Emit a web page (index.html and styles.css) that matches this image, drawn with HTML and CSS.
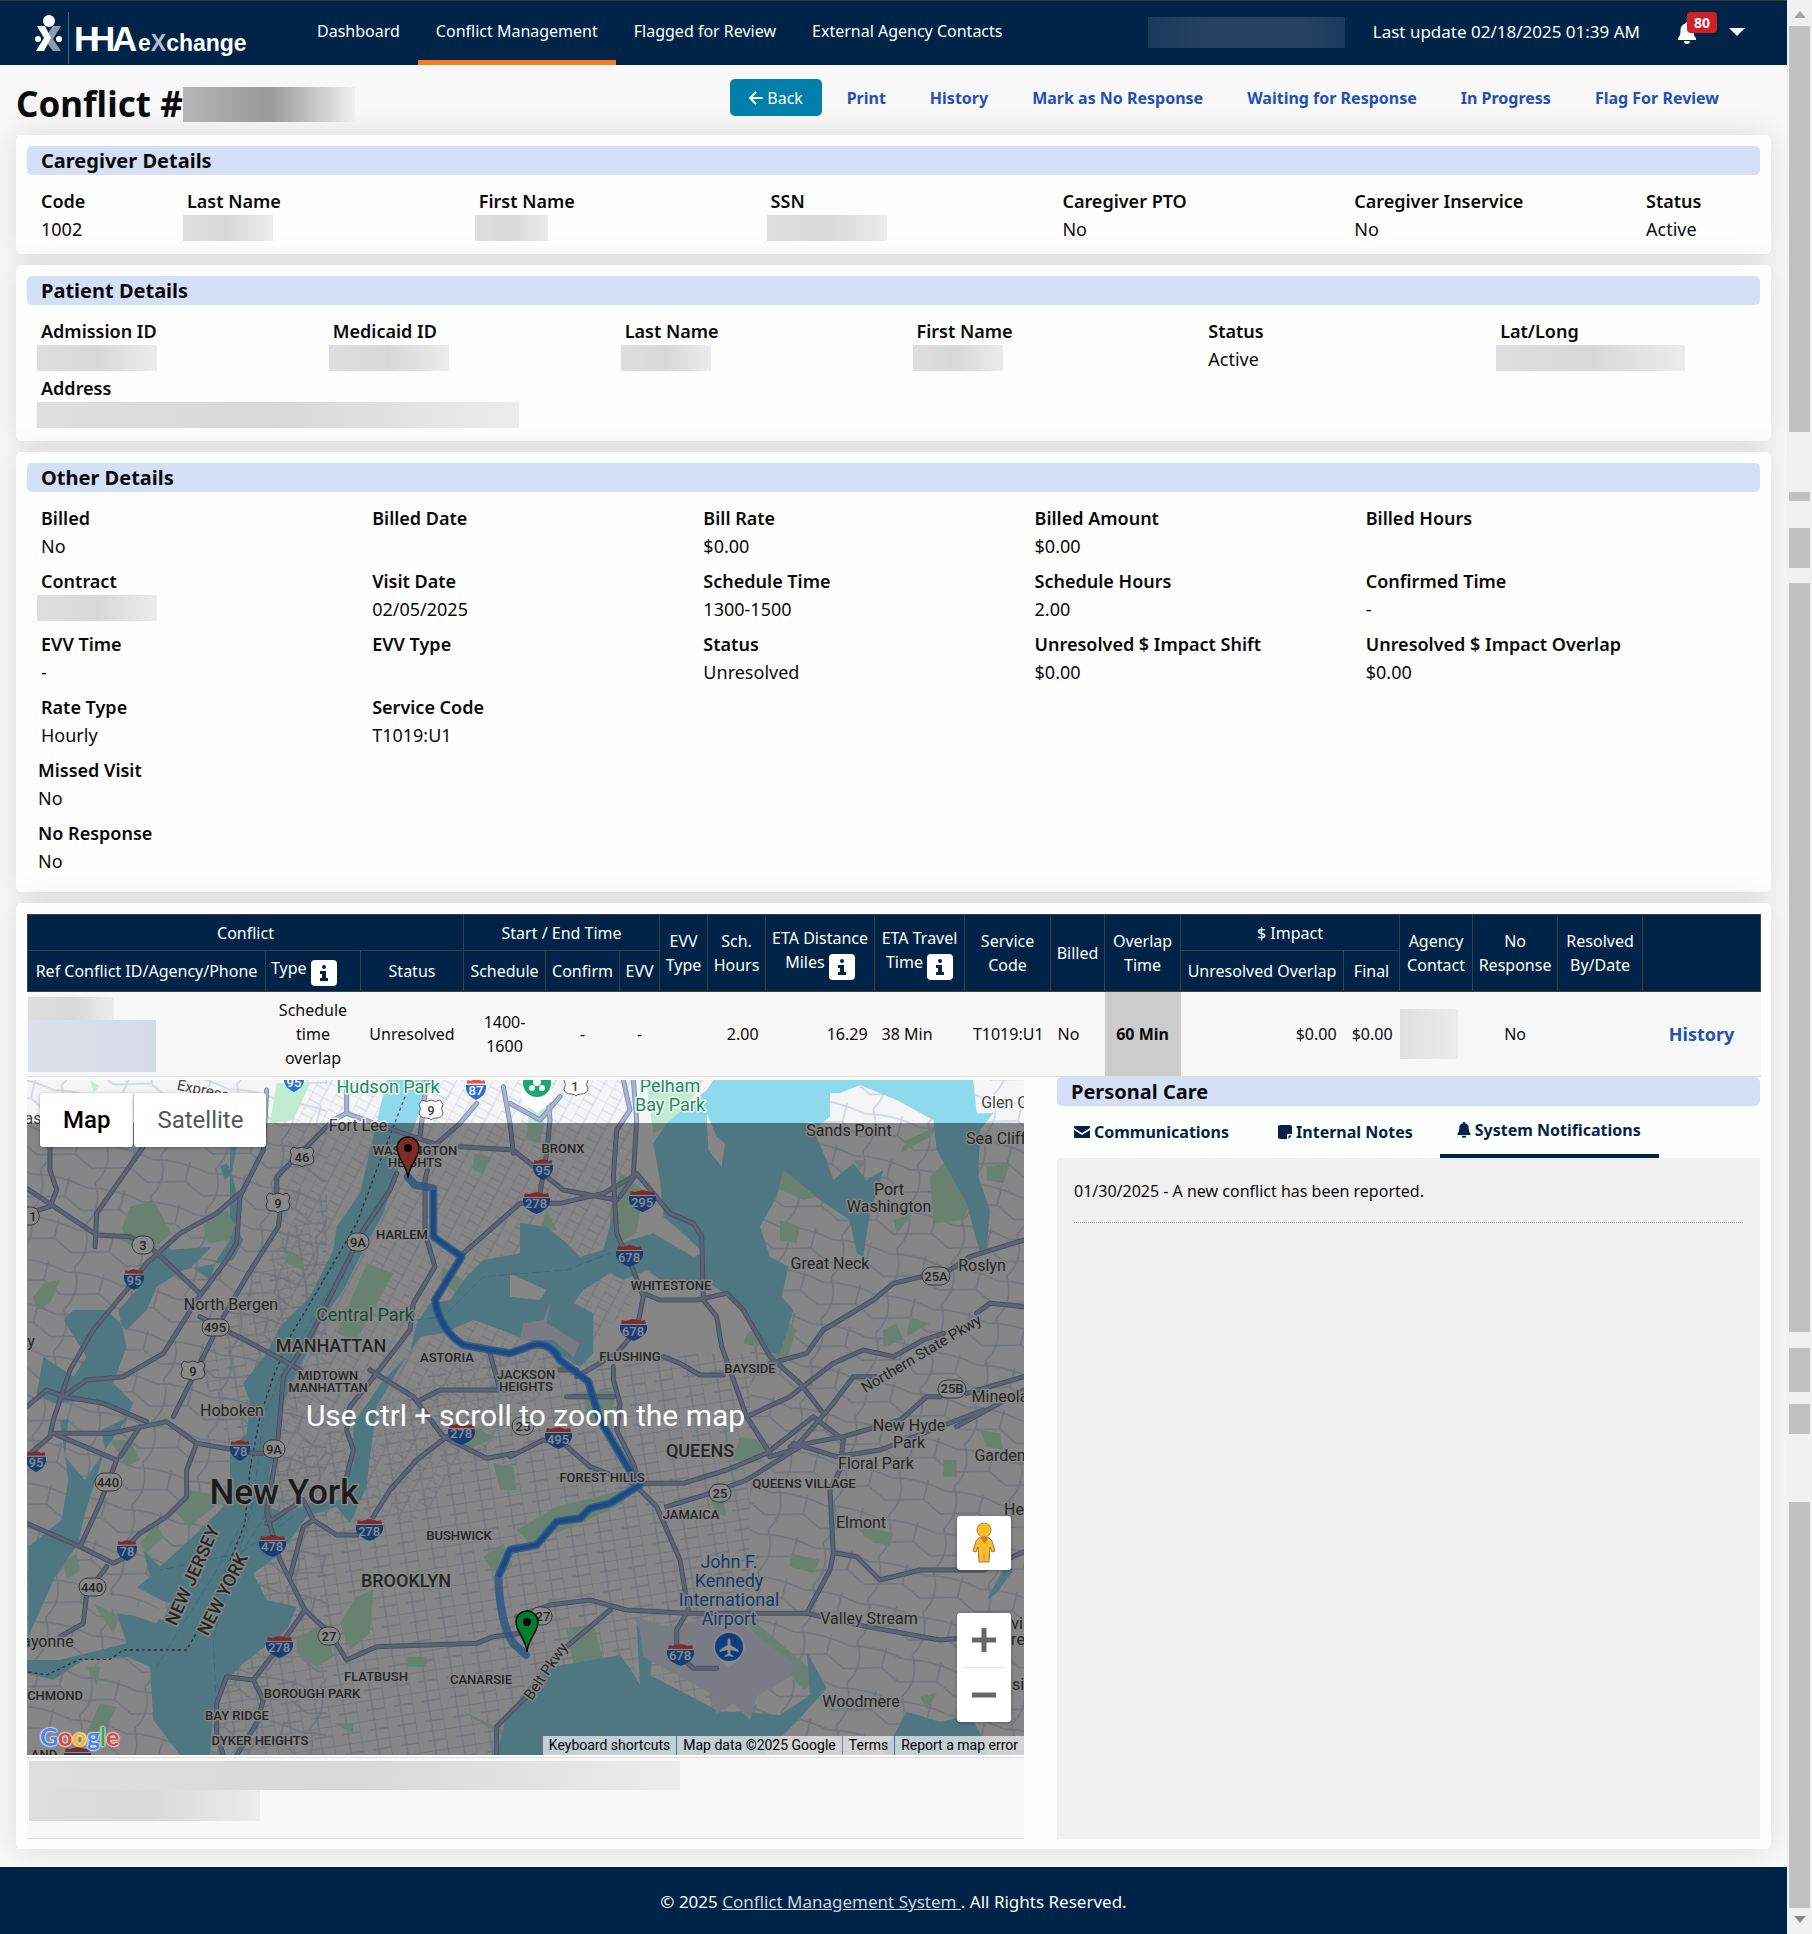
FILE: index.html
```html
<!DOCTYPE html>
<html lang="en">
<head>
    <meta charset="UTF-8">
    <meta name="viewport" content="width=device-width, initial-scale=1.0">
    <title>Conflict Management</title>
    <link rel="stylesheet" href="styles.css">
</head>
<body>
    <div class="page">
        <header class="topbar">
            <a class="brand" href="#" aria-label="HHAeXchange">
                <svg width="216" height="64" viewBox="0 0 216 64">
                    <circle cx="14" cy="20" r="6" fill="#fff"/>
                    <path d="M18 25h8l-8 13 8 12h-8L9 38z" fill="#8d9bad"/>
                    <path d="M2 25h8l6 12-7 13H1l8-13z" fill="#fff"/>
                    <circle cx="3" cy="38" r="3" fill="#fff"/>
                    <circle cx="24" cy="38" r="3" fill="#fff"/>
                    <path d="M33.500 11v52" stroke="#4d6680"/>
                    <text class="logo-big" y="50"><tspan x="39">H</tspan><tspan x="55">H</tspan><tspan x="77">A</tspan></text>
                    <text class="logo-small" x="103" y="50">e<tspan fill="#b4becb">X</tspan>change</text>
                </svg>
            </a>
            <nav class="main-nav">
                <a href="#">Dashboard</a>
                <a href="#" class="active">Conflict Management</a>
                <a href="#">Flagged for Review</a>
                <a href="#">External Agency Contacts</a>
            </nav>
            <div class="user-area">
                <span class="user-name"></span>
                <span>Last update 02/18/2025 01:39 AM</span>
                <button type="button" class="bell" aria-label="Notifications">
                    <svg width="18" height="22" viewBox="0 0 18 22" fill="#fff"><path d="M9 0c1 0 1.500.7 1.500 1.600C14 2.400 15.500 5 15.500 8c0 5 1 6.500 2.500 8v2H0v-2c1.500-1.500 2.500-3 2.500-8 0-3 1.500-5.600 5-6.400C7.500.7 8 0 9 0zM6 19h6a3 3 0 0 1-6 0z"/></svg>
                    <span class="badge">80</span>
                </button>
                <button type="button" class="caret" aria-label="Account menu"></button>
            </div>
        </header>

        <main>
            <div class="title-row">
                <h1>Conflict #<span class="mask mask-title"></span></h1>
                <div class="actions">
                    <button type="button" class="btn-back">
                        <svg width="15" height="14" viewBox="0 0 15 14" fill="none" stroke="#fff" stroke-width="2"><path d="M15 7H2M8 1L2 7l6 6"/></svg>
                        Back
                    </button>
                    <a href="#">Print</a>
                    <a href="#">History</a>
                    <a href="#">Mark as No Response</a>
                    <a href="#">Waiting for Response</a>
                    <a href="#">In Progress</a>
                    <a href="#">Flag For Review</a>
                </div>
            </div>

            <section class="card">
                <h2>Caregiver Details</h2>
                <dl class="fields twelve">
                    <div class="narrow"><dt>Code</dt><dd>1002</dd></div>
                    <div><dt>Last Name</dt><dd><span class="mask mask-sm"></span></dd></div>
                    <div><dt>First Name</dt><dd><span class="mask mask-xs"></span></dd></div>
                    <div><dt>SSN</dt><dd><span class="mask mask-md"></span></dd></div>
                    <div><dt>Caregiver PTO</dt><dd>No</dd></div>
                    <div><dt>Caregiver Inservice</dt><dd>No</dd></div>
                    <div class="narrow"><dt>Status</dt><dd>Active</dd></div>
                </dl>
            </section>

            <section class="card">
                <h2>Patient Details</h2>
                <dl class="fields twelve">
                    <div><dt>Admission ID</dt><dd><span class="mask mask-md"></span></dd></div>
                    <div><dt>Medicaid ID</dt><dd><span class="mask mask-md"></span></dd></div>
                    <div><dt>Last Name</dt><dd><span class="mask mask-sm"></span></dd></div>
                    <div><dt>First Name</dt><dd><span class="mask mask-sm"></span></dd></div>
                    <div><dt>Status</dt><dd>Active</dd></div>
                    <div><dt>Lat/Long</dt><dd><span class="mask mask-lg"></span></dd></div>
                    <div class="full"><dt>Address</dt><dd><span class="mask mask-xl"></span></dd></div>
                </dl>
            </section>

            <section class="card">
                <h2>Other Details</h2>
                <dl class="fields five">
                    <div><dt>Billed</dt><dd>No</dd></div>
                    <div><dt>Billed Date</dt><dd></dd></div>
                    <div><dt>Bill Rate</dt><dd>$0.00</dd></div>
                    <div><dt>Billed Amount</dt><dd>$0.00</dd></div>
                    <div><dt>Billed Hours</dt><dd></dd></div>
                    <div class="first"><dt>Contract</dt><dd><span class="mask mask-md"></span></dd></div>
                    <div><dt>Visit Date</dt><dd>02/05/2025</dd></div>
                    <div><dt>Schedule Time</dt><dd>1300-1500</dd></div>
                    <div><dt>Schedule Hours</dt><dd>2.00</dd></div>
                    <div><dt>Confirmed Time</dt><dd>-</dd></div>
                    <div class="first"><dt>EVV Time</dt><dd>-</dd></div>
                    <div><dt>EVV Type</dt><dd></dd></div>
                    <div><dt>Status</dt><dd>Unresolved</dd></div>
                    <div><dt>Unresolved $ Impact Shift</dt><dd>$0.00</dd></div>
                    <div><dt>Unresolved $ Impact Overlap</dt><dd>$0.00</dd></div>
                    <div class="first"><dt>Rate Type</dt><dd>Hourly</dd></div>
                    <div><dt>Service Code</dt><dd>T1019:U1</dd></div>
                </dl>
                <dl class="fields stacked">
                    <div><dt>Missed Visit</dt><dd>No</dd></div>
                    <div><dt>No Response</dt><dd>No</dd></div>
                </dl>
            </section>

            <section class="card">
                <table class="conflicts">
                    <colgroup>
                        <col class="c-ref"><col class="c-type"><col class="c-status"><col class="c-sched"><col class="c-confirm"><col class="c-evv"><col class="c-evvtype"><col class="c-hours"><col class="c-dist"><col class="c-travel"><col class="c-service"><col class="c-billed"><col class="c-overlap"><col class="c-unres"><col class="c-final"><col class="c-agency"><col class="c-resp"><col class="c-resp"><col class="c-history">
                    </colgroup>
                    <thead>
                        <tr>
                            <th colspan="3">Conflict</th>
                            <th colspan="3">Start / End Time</th>
                            <th rowspan="2">EVV Type</th>
                            <th rowspan="2">Sch. Hours</th>
                            <th rowspan="2">ETA Distance Miles <button type="button" class="info" aria-label="About distance"><svg width="10" height="16" viewBox="0 0 10 16" fill="#002447"><circle cx="5" cy="2" r="2"/><path d="M1 6h6v7h2v3H1v-3h2V9H1z"/></svg></button></th>
                            <th rowspan="2">ETA Travel Time <button type="button" class="info" aria-label="About travel time"><svg width="10" height="16" viewBox="0 0 10 16" fill="#002447"><circle cx="5" cy="2" r="2"/><path d="M1 6h6v7h2v3H1v-3h2V9H1z"/></svg></button></th>
                            <th rowspan="2">Service Code</th>
                            <th rowspan="2">Billed</th>
                            <th rowspan="2">Overlap Time</th>
                            <th colspan="2">$ Impact</th>
                            <th rowspan="2">Agency Contact</th>
                            <th rowspan="2">No Response</th>
                            <th rowspan="2">Resolved By/Date</th>
                            <th rowspan="2"></th>
                        </tr>
                        <tr>
                            <th>Ref Conflict ID/Agency/Phone</th>
                            <th class="left">Type <button type="button" class="info" aria-label="About type"><svg width="10" height="16" viewBox="0 0 10 16" fill="#002447"><circle cx="5" cy="2" r="2"/><path d="M1 6h6v7h2v3H1v-3h2V9H1z"/></svg></button></th>
                            <th>Status</th>
                            <th>Schedule</th>
                            <th>Confirm</th>
                            <th>EVV</th>
                            <th>Unresolved Overlap</th>
                            <th>Final</th>
                        </tr>
                    </thead>
                    <tbody>
                        <tr>
                            <td class="bare"><span class="mask mask-ref"></span><span class="mask mask-agency"></span></td>
                            <td>Schedule time overlap</td>
                            <td>Unresolved</td>
                            <td>1400-1600</td>
                            <td>-</td>
                            <td>-</td>
                            <td></td>
                            <td class="right">2.00</td>
                            <td class="right">16.29</td>
                            <td class="left">38 Min</td>
                            <td class="right">T1019:U1</td>
                            <td class="left">No</td>
                            <td class="overlap">60 Min</td>
                            <td class="right">$0.00</td>
                            <td class="right">$0.00</td>
                            <td class="bare"><span class="mask mask-contact"></span></td>
                            <td>No</td>
                            <td></td>
                            <td><a href="#">History</a></td>
                        </tr>
                    </tbody>
                </table>

                <div class="split">
                    <div class="left-pane">
                        <div class="map">
                            <svg class="map-canvas" viewBox="27 10 997 675" preserveAspectRatio="xMidYMid slice">
                                <defs>
                                    <pattern id="streets" width="66" height="48" patternUnits="userSpaceOnUse" patternTransform="rotate(28)"><path d="M0 0H66M0 25H40M0 0V48M36 0V48" stroke="#ccd5e3" stroke-width="3" fill="none"/></pattern>
                                    <pattern id="streets2" width="84" height="60" patternUnits="userSpaceOnUse" patternTransform="rotate(-9)"><path d="M0 0H84M30 30H84M0 0V60M48 0V60" stroke="#ccd5e3" stroke-width="4" fill="none"/></pattern>
                                    <pattern id="streets3" width="170" height="130" patternUnits="userSpaceOnUse" patternTransform="rotate(14)"><path d="M0 20Q80 0 170 20M20 0Q60 70 20 130M110 0V60L170 90M0 90L110 60" stroke="#ccd5e3" stroke-width="5" fill="none"/></pattern>
                                    <symbol id="interstate" viewBox="0 0 27 22" preserveAspectRatio="none"><path d="M0 6H27Q28 13 23 17 19 20 13.500 22 8 20 4 17-1 13 0 6z" fill="#2a6fd6"/><path d="M1 5L2 1l4 1 3-1 4.500-1L18 1l3 1 4-1 1 4z" fill="#e35149"/><path d="M0 5.500H27" stroke="#fff"/></symbol>
                                    <symbol id="us" viewBox="0 0 26 22"><path d="M4 1q4 3 9 0 5 3 9 0l3 4q-3 4 0 9-1 5-7 5-4 0-5 2-1-2-5-2-6 0-7-5 3-5 0-9z" fill="#fafafa" stroke="#666"/></symbol>
                                    <symbol id="pin" viewBox="0 0 24 43"><path d="M12 42C11 29 1 22 1 12a11 11 0 0 1 22 0C23 22 13 29 12 42z" stroke="#111" stroke-width="1.500"/><circle cx="12" cy="12" r="4" fill="#000"/></symbol>
                                    <g id="roads">
                                        <path d="M80 355L290 495 390 500 450 530 600 670M600 740L830 860 900 900M80 1010L140 960 190 980 310 1000 440 1055"/>
                                        <path d="M430 230L290 430 285 530M150 170L150 300 170 360 150 410 80 430M800 60L790 240 720 380 710 520 680 570 590 690 560 740 490 850 370 920 260 930 190 980"/>
                                        <path d="M1000 150L830 320V370M840 430L835 470 740 620 670 740M640 800L580 920 520 1040"/>
                                        <path d="M730 360L650 430 540 490 440 580 380 660 280 780 210 900 160 1050 150 1100 80 1160"/>
                                        <path d="M1040 30V130L1000 150M1040 130L1180 180 1300 220M1190 310L1170 360 1090 480 990 680 930 800 850 920 840 1040 830 1150 800 1320 810 1350"/>
                                        <path d="M1280 30L1260 200M1430 100L1380 160 1300 230 1275 330V490L1305 590 1240 700 1230 780 1130 910 1050 1010"/>
                                        <path d="M1380 230L1540 240 1690 360 1850 390M1390 550L1560 400 1680 400 1810 370 1900 320 1910 150 1900 30M1640 30L1650 150 1640 250 1620 370M1870 30L1890 120 1850 180 1840 320 1850 490 1900 600 1930 680 1910 780 1850 850 1730 920"/>
                                        <path d="M1530 100L1620 150 1680 80M1860 380L1910 310 2010 430 2080 460 2105 500 2110 680M1930 670L1980 690 2090 690 2180 670 2230 720 2310 860 2400 940 2470 1030"/>
                                        <path d="M2110 690L2150 740 2165 830 2240 1040 2310 1150M2310 880L2420 850 2470 780 2620 690 2680 640 2850 600 2910 560 3072 510"/>
                                        <path d="M1730 900H1680M1990 860L2040 880 2100 915H2170M2240 1040L2370 980 2500 880 2590 840 2680 860 2770 810 2830 790M2930 730L2970 700 3072 710M2630 920H2560L2500 1000 2380 1140 2310 1160M2680 1070L2780 980H2820M2900 970L3072 920M2870 1070L3072 960"/>
                                        <path d="M1840 890V930L1860 1000 1850 1080 1900 1180 1920 1240M1930 1240H2050L2180 1200 2300 1150 2440 1040 2530 1110 2520 1200 2490 1260 2500 1450 2490 1500 2420 1630M2380 1120L2510 1160 2640 1140 2950 1020M2370 1130L2530 1100 2700 1050"/>
                                        <path d="M1110 900L1240 980 1330 1100 1460 1165 1540 1150M1260 990L1320 960 1520 960M1470 850L1500 960M1340 1100L1250 1170 1170 1260 1120 1340M1530 1160L1630 1110 1690 1120 1770 1190 1900 1240 1970 1310 2040 1470 2065 1620 2030 1680V1750L2080 1795H2150"/>
                                        <path d="M2000 1310L2130 1270 2240 1230 2400 1130M2510 1450L2570 1460 2640 1530 2760 1500 2950 1500 3072 1445M1550 1640L1650 1605 1770 1590 1880 1620 2060 1630 2420 1630 2600 1670 2820 1710 2880 1705"/>
                                        <path d="M160 1090L330 1090 500 1055 590 1120 760 1150 820 1150M590 1120L560 1200V1280L500 1340 420 1390 390 1420M160 1090L350 1170 300 1300 240 1430M420 1070L360 1160M80 1360L240 1430 340 1480 380 1460M320 1490L260 1570 250 1660 180 1700"/>
                                        <path d="M800 1360L910 1290 940 1350 1010 1395H1070M940 1350L910 1370 870 1520M800 1330L840 1470 915 1620 830 1740 760 1830 680 1820 650 1900V1990L670 2055M915 1620L990 1690 1040 1770 1130 1730 1430 1720 1480 1700 1560 1690 1620 1640M760 1830L790 1890 770 1960 710 2055M1700 1730L1830 1620M1580 1880L1490 1970V2055"/>
                                        <path d="M1050 1010L1040 1080 1060 1140 1040 1220M1510 50L1530 160 1540 250M1840 980L1700 980"/>
                                    </g>
                                </defs>
                                <g transform="scale(.33333)">
                                    <rect x="81" y="30" width="2991" height="2025" fill="#f5f5f5"/>
                                    <rect x="81" y="30" width="900" height="2025" fill="url(#streets3)"/>
                                    <path d="M850 30H1900V700L1250 1350H800z" fill="url(#streets)"/>
                                    <path d="M700 1250L1400 850H2250V2055H600z" fill="url(#streets2)"/>
                                    <path d="M2250 30H3072V2055H2250z" fill="url(#streets3)"/>
                                    <path d="M600 900L850 500 980 360V900L740 1250z" fill="url(#streets2)"/>

                                    <g fill="#c0ecd2">
                                        <path d="M830 40H930L880 150 810 160zM270 30l30 20-20 15zM390 410l70-20 55 100-60 50-70-15-20-50zM610 470l60-50 45 10-30 80-60 10zM130 640l50-10-30 70-40 20-10-40zM860 540l50 20 0 40-50-20zM1100 580l80 30-110 200-60-20zM1330 590l60 40-20 40-50-40zM1420 250l50 10-20 50-30-10z"/>
                                        <path d="M1590 60l60 20-30 140-40-10zM1940 40l170-10-80 130-70 30zM2050 130l50 0-30 70zM2240 120l40 30-40 70zM1860 310l70 50-20 130-80 40 0-110zM1640 420l30 60-50 10zM2350 290l100 90-40 10-110-50zM2340 450l60 20-10 50-50-10zM2720 210l90-40-20 30-90 50zM2840 270l80 110-30 70-90 10-10-140zM2960 290l70-10-20 60-50-10zM2560 270l40 0-20 30zM2680 450l60-20-50 60zM2120 1260l40-20 20 100-30-10zM2240 790l40-20-10 60-40-10zM2330 720l60 60-30 90-60-30zM2730 740l60 20-70 40zM2650 780l40-20 20 50-60 20zM1750 970l100-10-20 90-70 0z"/>
                                        <path d="M330 1110l60 0 30 60-40 20zM520 1320l50-60 110 20-110 90zM420 1420l50-60 20 40-50 50zM190 1480l40-30 10 50-40 30zM280 1600l80 40-20 50zM730 1470l60-60 20 20-60 60zM1020 1660l50-80 50-20-10 130-60 50zM890 1700l90-40 20 100-50 30-60-40zM1220 1760l60 0 0 30-60 0zM1450 1460l60-40 30 70-50 30zM1340 1100l100-20 50 20-90 40zM1480 1180l60 10 10 70-50 0zM260 1790l40 0-10 60zM300 1900l50 10-40 90-60 10zM1380 1920l130 60 0 20zM1000 1960l60 0 0 30z"/>
                                        <path d="M1550 1380l120-70 200-50 0 40-130 60-150 60zM1700 1680l80-20 30 110-80 60zM1850 1800l60 80 20 160-40-10zM2220 1100l80 20-20 60-80-10zM2370 1450l90 20-20 40-70-20zM2590 1370l90 20-10 40-80-30zM2830 1170l40 0 0 50-40 0zM2940 1080l60 10 10 50-50-10zM2220 1640l50 20 200 170-60 30zM2760 1880l50-10-30 50z"/>
                                    </g>
                                    <g fill="#8fd9ed">
                                        <path d="M1160 30H1300L1250 150 1190 310 1150 430 1090 540 1030 660 960 760 920 850 880 930 850 1000 840 1100 810 1200 800 1310 860 1330 930 1300 1020 1290 1060 1180 1060 1060 1150 930 1230 850 1250 760 1290 700 1350 690 1400 620 1450 570 1560 550 1560 460 1640 470 1700 520 1740 560 1810 540 1840 430 1860 520 1960 490 2080 560 2110 550 2060 500 1990 440 1980 330 1960 220 2000 160 2120 60 2140 30H2920L2930 130 2980 130 2940 180 2935 320 2970 420 2960 540 2940 550 2900 400 2810 240 2800 150 2690 90 2580 45 2520 70 2490 70V140L2440 180 2480 270 2500 330 2560 280 2600 330 2650 300 2610 430 2590 560 2570 550 2550 450 2460 390 2400 340 2350 300 2330 380 2280 470 2310 560 2365 590 2345 680 2380 720 2340 850 2310 850 2210 700 2130 640 2010 650 1940 600 1870 630 1830 610 1750 660 1720 700 1780 730 1780 850 1740 890 1640 830 1560 800 1420 750 1330 790 1260 800 1200 890 1130 1010 1110 1160 1100 1250 1050 1360 1010 1310 920 1340 870 1410 830 1460 760 1510 800 1590 890 1610 860 1680 730 1780 680 1830 640 1920 630 2055H540L460 1950 450 1790 380 1760 250 1770 160 1830 80 1810V1770L180 1770 380 1720 350 1630 490 1650 510 1600 400 1560 450 1520 430 1440 480 1490 590 1390 690 1290 690 1140 740 1090 750 1000 730 940 800 850 840 770 930 680 1000 540 1010 470 1080 370 1120 200z"/>
                                        <path d="M690 160h35l-30 150 25 100-30 100-40 60-20 60-55-40 60-60-140 10-70 60-15 60-55 60 25 110-40 110 60 60-20 40-100-50-120 10-50-30 20-110 90 60 40-60-70-110 30-30 100 0 60 60 60-60 30-70 80-50 150-30 30-60-40-70zM660 290l20-10 15 30-20 20zM180 1050h25l-10 110 60 70 60-90-10-60 80-40-70 100-60 190-20 90-70 100-80 180V1430l100-80 20-120z"/>
                                        <path d="M1490 2055l30-120 110-140 230-40 30 40 30 50-10-180 60 10-20 140 210 110 60 0 120 10 90-60-10-130 60 110-80 90-110 110zM2650 2055l70-130 100 30 90-20 50 90v30zM2960 1590l60-110 20 20-50 70z"/>
                                    </g>
                                    <g fill="#f5f5f5">
                                        <path d="M1530 610l110 50-20 30-90-10zM2120 130l30 70 25 20-10 70-40-50zM370 1530l130 70-10 20-130-60zM300 1560l180 80-10 20-180-60z"/>
                                    </g>
                                    <g fill="#dce1f3">
                                        <path d="M1570 760l60-10 20-50-10 60 100 60-20 40-60-50-100 0zM1900 1640l110 30 170-40 200 150-10 40-100 60-20 70-50-50-50 30-20-60-200-110-10-80z"/>
                                    </g>
                                    <g fill="none" stroke="#6ec3dc" stroke-width="3" stroke-dasharray="24 9">
                                        <path d="M1060 540L930 760 850 900 790 1040 760 1300 650 1500 470 1790M760 1300L700 1500 640 1700 650 1950M1250 750L1330 740 1450 620 1700 600 1830 550M880 1340L720 1450 480 1500M820 1300L690 1500"/>
                                    </g>
                                    <path d="M1215 80L1130 300 1070 460 930 700 870 800 820 920 780 1040 750 1200 735 1360 640 1600 560 1740H370L330 1768 240 1768 140 1815 80 1805" fill="none" stroke="#555" stroke-width="4" stroke-dasharray="9 9"/>

                                    <use href="#roads" class="road-edge"/>
                                    <use href="#roads" class="road-fill"/>
                                    <path class="route" d="M1223 320L1245 345 1300 355V500L1385 560 1305 690Q1320 780 1390 825L1530 850 1600 825Q1650 815 1680 870L1765 935 1800 1050 1900 1220 1920 1245 1830 1300 1770 1315 1740 1345 1670 1355 1610 1425 1530 1440 1495 1520Q1500 1660 1540 1720L1578 1755"/>
                                    <path class="route-core" d="M1300 360V500L1385 560 1305 690Q1320 780 1390 825L1530 850 1600 825Q1650 815 1680 870L1765 935 1800 1050 1900 1220 1920 1245 1830 1300 1770 1315 1740 1345 1670 1355 1610 1425 1530 1440 1495 1520"/>
                                </g>

                                <g class="town">
                                    <text x="358" y="61">Fort Lee</text>
                                    <text x="231" y="240">North Bergen</text>
                                    <text x="232" y="346">Hoboken</text>
                                    <text x="849" y="66">Sands Point</text>
                                    <text x="996" y="74">Sea Cliff</text>
                                    <text x="1009" y="38">Glen Co</text>
                                    <text x="889" y="125">Port</text>
                                    <text x="889" y="142">Washington</text>
                                    <text x="830" y="199">Great Neck</text>
                                    <text x="982" y="201">Roslyn</text>
                                    <text x="1000" y="332">Mineola</text>
                                    <text x="909" y="361">New Hyde</text>
                                    <text x="909" y="378">Park</text>
                                    <text x="876" y="399">Floral Park</text>
                                    <text x="1000" y="391">Garden</text>
                                    <text x="861" y="458">Elmont</text>
                                    <text x="1014" y="445">He</text>
                                    <text x="869" y="554">Valley Stream</text>
                                    <text x="861" y="637">Woodmere</text>
                                    <text x="48" y="577">ayonne</text>
                                    <text x="33" y="54">as</text>
                                    <text x="31" y="277">y</text>
                                    <text x="1021" y="559">vill</text>
                                    <text x="1018" y="620">si</text>
                                    <text x="1018" y="575">re</text>
                                    <text class="highway" transform="translate(924 288) rotate(-31)">Northern State Pkwy</text>
                                    <text class="highway" transform="translate(550 604) rotate(-56)">Belt Pkwy</text>
                                    <text class="highway" x="202" y="25" transform="rotate(12 202 25)">Express</text>
                                </g>
                                <g class="hood">
                                    <text x="415" y="85">WASHINGTON</text>
                                    <text x="415" y="97">HEIGHTS</text>
                                    <text x="402" y="169">HARLEM</text>
                                    <text x="447" y="292">ASTORIA</text>
                                    <text x="328" y="310">MIDTOWN</text>
                                    <text x="328" y="322">MANHATTAN</text>
                                    <text x="526" y="309">JACKSON</text>
                                    <text x="526" y="321">HEIGHTS</text>
                                    <text x="563" y="83">BRONX</text>
                                    <text x="671" y="220">WHITESTONE</text>
                                    <text x="630" y="291">FLUSHING</text>
                                    <text x="750" y="303">BAYSIDE</text>
                                    <text x="602" y="412">FOREST HILLS</text>
                                    <text x="804" y="418">QUEENS VILLAGE</text>
                                    <text x="691" y="449">JAMAICA</text>
                                    <text x="459" y="470">BUSHWICK</text>
                                    <text x="376" y="611">FLATBUSH</text>
                                    <text x="481" y="614">CANARSIE</text>
                                    <text x="312" y="628">BOROUGH PARK</text>
                                    <text x="237" y="650">BAY RIDGE</text>
                                    <text x="260" y="675">DYKER HEIGHTS</text>
                                    <text x="55" y="630">CHMOND</text>
                                    <text x="44" y="689">AND</text>
                                </g>
                                <g class="borough">
                                    <text x="331" y="282">MANHATTAN</text>
                                    <text x="406" y="517">BROOKLYN</text>
                                    <text x="700" y="387">QUEENS</text>
                                    <text transform="translate(198 508) rotate(-66)">NEW JERSEY</text>
                                    <text transform="translate(228 527) rotate(-63)">NEW YORK</text>
                                </g>
                                <text class="city" x="284" y="434">New York</text>
                                <g class="park">
                                    <text x="388" y="23">Hudson Park</text>
                                    <text x="365" y="251">Central Park</text>
                                    <text x="670" y="22">Pelham</text>
                                    <text x="670" y="41">Bay Park</text>
                                </g>
                                <g class="airport">
                                    <text x="729" y="498">John F.</text>
                                    <text x="729" y="517">Kennedy</text>
                                    <text x="729" y="536">International</text>
                                    <text x="729" y="555">Airport</text>
                                </g>
                                <path d="M729 598l-9-8a16 16 0 1 1 18 0z" fill="#f5f5f5"/>
                                <circle cx="729" cy="577" r="14" fill="#1a6fe8"/>
                                <path d="M729 568l1.500 2v5l8 5v2l-8-2v4l3 2v1l-4.500-1-4.500 1v-1l3-2v-4l-8 2v-2l8-5v-5z" fill="#fff"/>
                                <path d="M537 43l-12-9a16 16 0 1 1 24 0z" fill="#fff"/>
                                <circle cx="537" cy="13" r="14" fill="#1aa86c"/>
                                <g fill="#fff"><circle cx="532" cy="18" r="3"/><circle cx="542" cy="18" r="3"/><circle cx="537" cy="12" r="4"/></g>

                                <g>
                                    <use href="#interstate" x="124" y="199" width="20" height="21"/>
                                    <use href="#interstate" x="284" y="1" width="20" height="21"/>
                                    <use href="#interstate" x="466" y="9" width="20" height="21"/>
                                    <use href="#interstate" x="533" y="89" width="20" height="21"/>
                                    <use href="#interstate" x="523" y="122" width="27" height="22"/>
                                    <use href="#interstate" x="629" y="120" width="27" height="22"/>
                                    <use href="#interstate" x="616" y="175" width="27" height="22"/>
                                    <use href="#interstate" x="620" y="249" width="27" height="22"/>
                                    <use href="#interstate" x="26" y="381" width="20" height="21"/>
                                    <use href="#interstate" x="230" y="370" width="20" height="21"/>
                                    <use href="#interstate" x="259" y="465" width="27" height="22"/>
                                    <use href="#interstate" x="117" y="470" width="20" height="21"/>
                                    <use href="#interstate" x="356" y="449" width="27" height="22"/>
                                    <use href="#interstate" x="266" y="566" width="27" height="22"/>
                                    <use href="#interstate" x="448" y="353" width="27" height="22"/>
                                    <use href="#interstate" x="545" y="357" width="27" height="22"/>
                                    <use href="#interstate" x="667" y="574" width="27" height="22"/>
                                    <use href="#interstate" x="64" y="677" width="27" height="22"/>
                                </g>
                                <g class="shield-text">
                                    <text x="134" y="215">95</text><text x="294" y="17">95</text><text x="476" y="25">87</text><text x="543" y="105">95</text>
                                    <text x="536" y="138">278</text><text x="642" y="137">295</text><text x="629" y="192">678</text><text x="633" y="266">678</text>
                                    <text x="36" y="397">95</text><text x="240" y="386">78</text><text x="272" y="481">478</text><text x="127" y="486">78</text>
                                    <text x="369" y="466">278</text><text x="279" y="582">278</text><text x="461" y="368">278</text><text x="558" y="374">495</text><text x="680" y="590">678</text>
                                </g>
                                <g>
                                    <use href="#us" x="418" y="29" width="26" height="22"/>
                                    <use href="#us" x="289" y="76" width="26" height="22"/>
                                    <use href="#us" x="265" y="122" width="26" height="22"/>
                                    <use href="#us" x="180" y="290" width="26" height="22"/>
                                    <use href="#us" x="563" y="5" width="26" height="22"/>
                                </g>
                                <g fill="#fafafa" stroke="#666">
                                    <rect x="132" y="166" width="22" height="18" rx="9"/><rect x="347" y="163" width="22" height="18" rx="9"/><rect x="202" y="249" width="27" height="17" rx="8"/><rect x="13" y="137" width="26" height="18" rx="8"/>
                                    <rect x="922" y="197" width="28" height="18" rx="9"/><rect x="938" y="310" width="28" height="18" rx="9"/><rect x="95" y="403" width="27" height="18" rx="9"/><rect x="263" y="370" width="22" height="18" rx="9"/>
                                    <rect x="79" y="508" width="27" height="18" rx="9"/><rect x="318" y="557" width="22" height="18" rx="9"/><rect x="709" y="414" width="22" height="18" rx="9"/><rect x="512" y="347" width="22" height="18" rx="9"/><rect x="530" y="537" width="22" height="18" rx="9"/>
                                </g>
                                <g class="route-text">
                                    <text x="431" y="45">9</text><text x="302" y="92">46</text><text x="278" y="138">9</text><text x="193" y="306">9</text><text x="575" y="21">1</text>
                                    <text x="143" y="180">3</text><text x="358" y="177">9A</text><text x="215" y="262">495</text><text x="33" y="151">1</text>
                                    <text x="936" y="211">25A</text><text x="952" y="323">25B</text><text x="108" y="417">440</text><text x="274" y="384">9A</text>
                                    <text x="92" y="522">440</text><text x="329" y="571">27</text><text x="720" y="428">25</text><text x="523" y="361">25</text><text x="543" y="551">27</text>
                                </g>
                                <use href="#pin" x="396" y="66" width="24" height="43" fill="#ea5046"/>
                                <use href="#pin" x="515" y="540" width="24" height="43" fill="#00e64d"/>
                            </svg>
                            <div class="map-hint">Use ctrl + scroll to zoom the map</div>
                            <div class="map-types">
                                <button type="button" class="selected">Map</button>
                                <button type="button">Satellite</button>
                            </div>
                            <button type="button" class="pegman" aria-label="Street View">
                                <svg width="24" height="42" viewBox="0 0 24 42"><path d="M7 16h10l3 3 3 10-3 1-2-5-1 15H7L6 25l-2 5-3-1 3-10z" fill="#fbbc2c" stroke="#8d7a52"/><path d="M12 31v9" stroke="#c8922b"/><path d="M8 15h9l-4 7z" fill="#e5742c"/><circle cx="12" cy="8" r="7" fill="#fbbc2c" stroke="#a8873f"/></svg>
                            </button>
                            <div class="zoom">
                                <button type="button" aria-label="Zoom in"><svg width="24" height="24" viewBox="0 0 24 24"><path d="M0 12H24M12 0V24" stroke="#666" stroke-width="5"/></svg></button>
                                <button type="button" aria-label="Zoom out"><svg width="24" height="24" viewBox="0 0 24 24"><path d="M0 12H24" stroke="#666" stroke-width="5"/></svg></button>
                            </div>
                            <div class="google"><span class="g-blue">G</span><span class="g-red">o</span><span class="g-yellow">o</span><span class="g-blue">g</span><span class="g-green">l</span><span class="g-red">e</span></div>
                            <div class="map-legal">
                                <button type="button">Keyboard shortcuts</button>
                                <span>Map data ©2025 Google</span>
                                <a href="#">Terms</a>
                                <a href="#">Report a map error</a>
                            </div>
                        </div>
                        <div class="directions">
                            <span class="mask mask-route"></span>
                            <span class="mask mask-route-end"></span>
                        </div>
                    </div>

                    <div class="right-pane">
                        <h2>Personal Care</h2>
                        <div class="tabs" role="tablist">
                            <button type="button" role="tab">
                                <svg width="16" height="12" viewBox="0 0 16 12" fill="#002447"><path d="M1 0h14q1 0 1 1v1L8 7 0 2V1q0-1 1-1zM0 4l8 5 8-5v7q0 1-1 1H1q-1 0-1-1z"/></svg>
                                Communications
                            </button>
                            <button type="button" role="tab">
                                <svg width="14" height="14" viewBox="0 0 14 14" fill="#002447"><path d="M2 0h10q2 0 2 2v7H9v5H2q-2 0-2-2V2q0-2 2-2zM10.500 10.500H14L10.500 14z"/></svg>
                                Internal Notes
                            </button>
                            <button type="button" role="tab" class="active" aria-selected="true">
                                <svg width="14" height="16" viewBox="0 0 18 22" fill="#002447"><path d="M9 0c1 0 1.500.7 1.500 1.600C14 2.400 15.500 5 15.500 8c0 5 1 6.500 2.500 8v2H0v-2c1.500-1.500 2.500-3 2.500-8 0-3 1.500-5.600 5-6.400C7.500.7 8 0 9 0zM6 19h6a3 3 0 0 1-6 0z"/></svg>
                                System Notifications
                            </button>
                        </div>
                        <div class="tab-panel">
                            <p>01/30/2025 - A new conflict has been reported.</p>
                        </div>
                    </div>
                </div>
            </section>
        </main>

        <footer>© 2025 <a href="#">Conflict Management System </a>. All Rights Reserved.</footer>
    </div>
    <div class="scroll-track">
        <svg width="12" height="7" viewBox="0 0 12 7" fill="#a3a3a3"><path d="M0 7L6 0l6 7z"/></svg>
        <div class="scroll-thumb"></div>
        <svg width="12" height="7" viewBox="0 0 12 7" fill="#8a8a8a"><path d="M0 0h12L6 7z"/></svg>
    </div>
</body>
</html>
```
FILE: styles.css
```css
* {
    box-sizing: border-box;
}

body {
    display: flex;
    margin: 0;
    font-family: "Noto Sans", "Open Sans", sans-serif;
    font-size: 18px;
    line-height: 28px;
    color: #0a0a0a;
    background: #f8f8f8;
}

button {
    font: inherit;
    border: none;
    padding: 0;
    background: none;
    cursor: pointer;
}

a {
    color: #2450b2;
    text-decoration: none;
}

svg {
    flex: none;
}

.page {
    flex: 1;
    min-width: 0;
}

/* top bar */
.topbar {
    display: flex;
    height: 65px;
    padding-left: 35px;
    border-top: 1px solid #3b3b3b;
    background: #002447;
    color: #fff;
}

.brand {
    display: block;
    width: 264px;
}

.logo-big {
    font: bold 35px "Liberation Sans", sans-serif;
    fill: #fff;
}

.logo-small {
    font: bold 23px "Liberation Sans", sans-serif;
    fill: #fff;
}

.main-nav {
    display: flex;
    font-size: 16px;
}

.main-nav a {
    padding: 16px 18px 0;
    border-bottom: 5px solid transparent;
    color: #fff;
}

.main-nav a.active {
    border-color: #f57c20;
}

.user-area {
    display: flex;
    align-items: center;
    margin-left: auto;
    padding: 0 42px 2px 0;
    font-size: 17px;
}

.user-name {
    width: 197px;
    height: 31px;
    margin-right: 28px;
    background: linear-gradient(90deg, #183a5b, #25435f 30%, #25435f 80%, #183a5b);
}

.bell {
    position: relative;
    display: flex;
    margin: 2px 33px 0 38px;
}

.badge {
    position: absolute;
    left: 9px;
    top: -10px;
    width: 30px;
    border-radius: 4px;
    background: #cf2028;
    color: #fff;
    font-size: 14px;
    font-weight: 700;
    line-height: 21px;
}

.caret {
    border: 8px solid transparent;
    border-top-color: #fff;
    border-bottom: none;
}

/* title and actions */
main {
    padding: 0 16px 18px;
}

.title-row {
    display: flex;
    justify-content: space-between;
    height: 70px;
}

h1 {
    display: flex;
    align-items: center;
    margin: 9px 0 0;
    height: 60px;
    font-size: 35px;
    font-weight: 700;
}

.actions {
    display: flex;
    align-items: center;
    height: 37px;
    margin: 14px 30px 0 0;
    font-size: 16px;
    font-weight: 700;
}

.actions a {
    padding: 0 22px;
}

.actions .btn-back {
    display: flex;
    align-items: center;
    justify-content: center;
    gap: 4px;
    width: 92px;
    height: 37px;
    margin-right: 3px;
    border-radius: 5px;
    background: #007fab;
    color: #fff;
    font-weight: 400;
}

/* cards */
.card {
    margin-bottom: 11px;
    padding: 11px;
    border-radius: 5px;
    background: #fefefe;
    box-shadow: 0 0 30px rgba(0, 0, 0, 0.12);
}

.card:last-child {
    margin-bottom: 0;
}

h2 {
    margin: 0 0 12px;
    padding: 1px 14px 0;
    border-radius: 5px;
    background: #d5dff7;
    font-size: 20px;
    font-weight: 700;
    line-height: 28px;
}

.fields {
    display: grid;
    margin: 0;
    padding-left: 14px;
}

dt {
    font-weight: 600;
}

dd {
    height: 28px;
    margin: 0;
}

.twelve {
    grid-template-columns: repeat(12, 1fr);
    margin-right: -32px;
}

.twelve > div {
    grid-column: span 2;
}

.twelve > .narrow {
    grid-column: span 1;
}

.twelve > .full {
    grid-column: 1 / -1;
    padding-top: 1px;
}

.five {
    grid-template-columns: repeat(5, 21fr) 4fr;
}

.five > div {
    height: 63px;
}

.five > .first {
    grid-column: 1;
}

.stacked {
    margin-bottom: -1px;
    padding-left: 11px;
}

.stacked > div {
    height: 63px;
}

/* hidden personal values */
.mask {
    display: block;
    height: 26px;
    margin-left: -4px;
    background: linear-gradient(90deg, #dedede, #d8d8d8 50%, #ececec);
}

.mask-title {
    width: 172px;
    height: 35px;
    margin-left: 0;
    background: linear-gradient(90deg, #b6b6b6, #999 50%, #f0f0f0);
}

.mask-xs { width: 73px; }
.mask-sm { width: 90px; }
.mask-md { width: 120px; }
.mask-lg { width: 189px; }
.mask-xl { width: 482px; }

.mask-ref {
    width: 86px;
    height: 23px;
    margin-left: 0;
}

.mask-agency {
    width: 128px;
    height: 52px;
    margin-left: 0;
    background: linear-gradient(90deg, #dde1ec, #d6dae6);
}

.mask-contact {
    width: 58px;
    height: 50px;
    margin-left: 0;
    background: linear-gradient(90deg, #e0e0e0, #ebebeb);
}

/* conflicts table */
.conflicts {
    width: 100%;
    table-layout: fixed;
    border-collapse: collapse;
    font-size: 16px;
    line-height: 24px;
    text-align: center;
}

.c-ref { width: 238px; }
.c-type { width: 95px; }
.c-status { width: 103px; }
.c-sched { width: 82px; }
.c-confirm { width: 74px; }
.c-evv { width: 40px; }
.c-evvtype { width: 48px; }
.c-hours { width: 58px; }
.c-dist { width: 109px; }
.c-travel { width: 90px; }
.c-service { width: 86px; }
.c-billed { width: 54px; }
.c-overlap { width: 76px; }
.c-unres { width: 163px; }
.c-final { width: 56px; }
.c-agency { width: 73px; }
.c-resp { width: 85px; }
.c-history { width: 118px; }

.conflicts th {
    height: 36px;
    padding: 0 2px;
    border: 1px solid #404040;
    background: #002447;
    color: #fff;
    font-weight: 400;
}

.conflicts tr + tr th {
    height: 41px;
}

.conflicts td {
    height: 85px;
    padding: 6px 7px;
    border-bottom: 1px solid #ddd;
    background: #f8f8f8;
}

.conflicts .left {
    padding-left: 7px;
    text-align: left;
}

.conflicts th.left {
    padding-left: 5px;
}

.conflicts .right {
    text-align: right;
}

.conflicts td.bare {
    padding: 0;
}

.conflicts td.overlap {
    background: #ccc;
    font-weight: 700;
}

.conflicts td a {
    font-size: 18px;
    font-weight: 700;
}

.info {
    display: inline-flex;
    align-items: center;
    justify-content: center;
    width: 26px;
    height: 26px;
    border-radius: 4px;
    background: #fff;
    vertical-align: -7px;
}

/* map and notes */
.split {
    display: grid;
    grid-template-columns: 997fr 703fr;
    gap: 33px;
    margin-bottom: -1px;
}

.left-pane {
    display: flex;
    flex-direction: column;
    min-width: 0;
    padding-top: 3px;
}

.map {
    position: relative;
    height: 675px;
    overflow: hidden;
    font-family: Roboto, sans-serif;
}

.map-canvas {
    display: block;
    width: 100%;
    height: 100%;
}

.map-canvas text {
    text-anchor: middle;
    paint-order: stroke;
    stroke: #f5f5f5;
    stroke-width: 3px;
    stroke-linejoin: round;
}

.road-edge,
.road-fill {
    fill: none;
    stroke: #8290b6;
    stroke-width: 15px;
    stroke-linejoin: round;
    stroke-linecap: round;
}

.road-fill {
    stroke: #a9b5d6;
    stroke-width: 9px;
}

.route {
    fill: none;
    stroke: #4a98f4;
    stroke-opacity: 0.8;
    stroke-width: 24px;
    stroke-linejoin: round;
    stroke-linecap: round;
}

.route-core {
    fill: none;
    stroke: #3486ee;
    stroke-width: 14px;
    stroke-linejoin: round;
}

.town { font-size: 16px; fill: #444; }
.highway { font-size: 15px; }
.hood { font-size: 13px; font-weight: 500; fill: #444; }
.borough { font-size: 18px; font-weight: 500; fill: #444; }
.city { font-size: 35px; font-weight: 500; fill: #333; }
.park { font-size: 18px; fill: #1e8e5e; }
.airport { font-size: 18px; fill: #2a66c8; }

.map-canvas .shield-text,
.map-canvas .route-text {
    font-size: 13px;
    font-weight: 500;
}

.map-canvas .shield-text text {
    fill: #fff;
    stroke: none;
}

.map-canvas .route-text text {
    fill: #444;
    stroke: none;
}

.map-hint {
    position: absolute;
    inset: 43px 0 0;
    display: flex;
    align-items: center;
    justify-content: center;
    padding-bottom: 46px;
    background: rgba(0, 0, 0, 0.45);
    color: #fff;
    font-size: 30px;
}

.map-types {
    position: absolute;
    left: 13px;
    top: 13px;
    display: flex;
    gap: 1px;
}

.map-types button {
    height: 54px;
    padding: 0 23px;
    border-radius: 3px;
    background: #fff;
    box-shadow: 0 1px 4px rgba(0, 0, 0, 0.3);
    color: #565656;
    font-size: 24px;
}

.map-types .selected {
    color: #000;
    font-weight: 500;
}

.pegman,
.zoom {
    position: absolute;
    right: 13px;
    width: 54px;
    border-radius: 3px;
    background: #fff;
    box-shadow: 0 1px 4px rgba(0, 0, 0, 0.3);
}

.pegman {
    bottom: 185px;
    display: flex;
    align-items: center;
    justify-content: center;
    height: 54px;
}

.zoom {
    bottom: 33px;
    display: flex;
    flex-direction: column;
    padding: 0 7px;
}

.zoom button {
    display: flex;
    align-items: center;
    justify-content: center;
    height: 54px;
}

.zoom button + button {
    height: 55px;
    border-top: 1px solid #e6e6e6;
}

.google {
    position: absolute;
    left: 13px;
    bottom: 5px;
    font-family: Lato, sans-serif;
    font-size: 25px;
    font-weight: 700;
    text-shadow: 0 0 2px #fff, 0 0 2px #fff, 0 0 2px #fff;
}

.g-blue { color: #4285f4; }
.g-red { color: #ea4335; }
.g-yellow { color: #fbbc05; }
.g-green { color: #34a853; }

.map-legal {
    position: absolute;
    right: 0;
    bottom: 0;
    display: flex;
    gap: 1px;
    font-size: 14px;
    line-height: 19px;
}

.map-legal > * {
    padding: 0 6px;
    background: rgba(245, 245, 245, 0.7);
    color: #000;
}

.directions {
    flex: 1;
    margin-top: 2px;
    padding: 3px 2px;
    border: solid #ddd;
    border-width: 1px 0;
    background: #f8f8f8;
}

.mask-route {
    width: 651px;
    height: 29px;
    margin-left: 0;
}

.mask-route-end {
    width: 231px;
    height: 31px;
    margin-left: 0;
}

.right-pane {
    display: flex;
    flex-direction: column;
}

.right-pane h2 {
    margin: 0;
}

.tabs {
    display: flex;
    height: 52px;
    font-size: 16px;
    font-weight: 700;
}

.tabs button {
    display: flex;
    align-items: center;
    gap: 4px;
    padding: 0 27px 0 22px;
    color: #002447;
}

.tabs button:first-child {
    padding-left: 17px;
}

.tabs .active {
    padding: 0 18px 0 17px;
    border-bottom: 4px solid #002447;
}

.tab-panel {
    height: 681px;
    padding: 15px 17px;
    background: #f0f0f0;
}

.tab-panel p {
    margin: 0;
    padding: 4px 0 17px;
    border-bottom: 1px dotted #aaa;
    font-size: 16px;
}

footer {
    height: 67px;
    padding-top: 21px;
    background: #002447;
    color: #fff;
    text-align: center;
    font-size: 17px;
}

footer a {
    color: #cfd6de;
    text-decoration: underline;
}

/* scroll track at the right of the window */
.scroll-track {
    display: flex;
    flex-direction: column;
    align-items: center;
    width: 25px;
    padding: 11px 0;
    background: #f1f1f1;
}

.scroll-thumb {
    flex: 1;
    width: 21px;
    margin: 8px 0;
    background: linear-gradient(#c1c1c1 406px, #f1f1f1 406px 466px, #c1c1c1 466px 475px, #f1f1f1 475px 502px, #c1c1c1 502px 542px, #f1f1f1 542px 557px, #c1c1c1 557px 1306px, #f1f1f1 1306px 1322px, #c1c1c1 1322px 1366px, #f1f1f1 1366px 1378px, #c1c1c1 1378px 1408px, #f1f1f1 1408px 1476px, #c1c1c1 1476px);
}
```
